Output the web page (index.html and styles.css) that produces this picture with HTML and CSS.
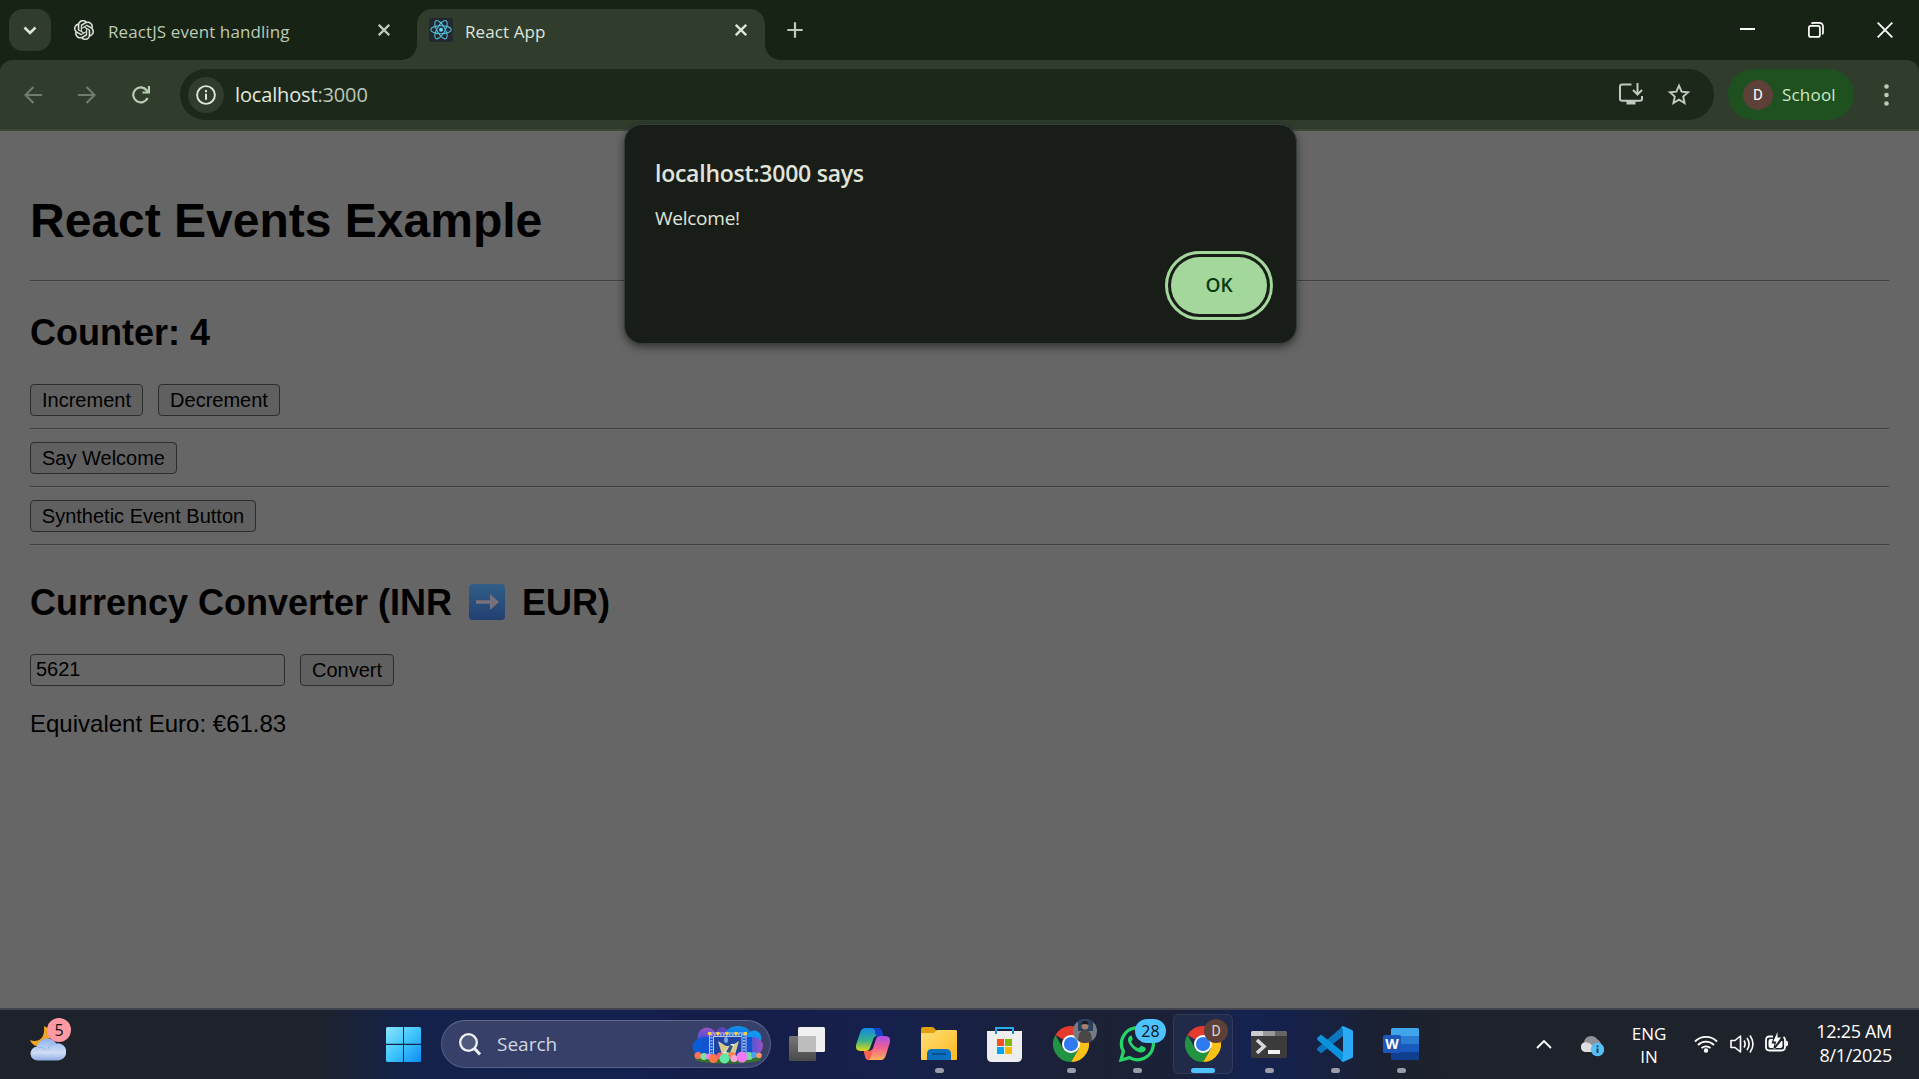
FILE: index.html
```html
<!DOCTYPE html>
<html lang="en">
<head>
<meta charset="utf-8">
<title>React App</title>
<link rel="stylesheet" href="styles.css">
</head>
<body>
<svg class="defs" width="0" height="0">
  <symbol id="chrome" viewBox="0 0 48 48">
    <path fill="#e33b2e" d="M24 24 3.2 12A24 24 0 0 1 44.8 12z"/>
    <path fill="#fbc116" d="M24 12h20.8A24 24 0 0 1 24 48l10.4-18z"/>
    <path fill="#229342" d="M3.2 12A24 24 0 0 0 24 48l10.4-18L24 24 13.6 30z"/>
    <circle cx="24" cy="24" r="12" fill="#fff"/>
    <circle cx="24" cy="24" r="9.5" fill="#2f7af0"/>
  </symbol>
  <symbol id="cross" viewBox="0 0 12 12"><path d="M.8.8l10.4 10.4M11.2.8.8 11.2" fill="none" stroke="currentColor" stroke-width="2.3"/></symbol>
</svg>

<header class="tabstrip">
  <button class="tab-search"><svg width="14" height="9" viewBox="0 0 14 9"><path d="M1.5 1.5 7 7l5.500-5.500" fill="none" stroke="currentColor" stroke-width="2.500"/></svg></button>
  <div class="tab">
    <svg class="gpt" width="20" height="20" viewBox="0 0 24 24"><path fill="#e8ebe6" stroke="#e8ebe6" stroke-width=".3" d="M22.2819 9.8211a5.9847 5.9847 0 0 0-.5157-4.9108 6.0462 6.0462 0 0 0-6.5098-2.9A6.0651 6.0651 0 0 0 4.9807 4.1818a5.9847 5.9847 0 0 0-3.9977 2.9 6.0462 6.0462 0 0 0 .7427 7.0966 5.98 5.98 0 0 0 .511 4.9107 6.051 6.051 0 0 0 6.5146 2.9001A5.9847 5.9847 0 0 0 13.2599 24a6.0557 6.0557 0 0 0 5.7718-4.2058 5.9894 5.9894 0 0 0 3.9977-2.9001 6.0557 6.0557 0 0 0-.7475-7.0729zm-9.022 12.6081a4.4755 4.4755 0 0 1-2.8764-1.0408l.1419-.0804 4.7783-2.7582a.7948.7948 0 0 0 .3927-.6813v-6.7369l2.02 1.1686a.071.071 0 0 1 .038.052v5.5826a4.504 4.504 0 0 1-4.4945 4.4944zm-9.6607-4.1254a4.4708 4.4708 0 0 1-.5346-3.0137l.142.0852 4.783 2.7582a.7712.7712 0 0 0 .7806 0l5.8428-3.3685v2.3324a.0804.0804 0 0 1-.0332.0615L9.74 19.9502a4.4992 4.4992 0 0 1-6.1408-1.6464zM2.3408 7.8956a4.485 4.485 0 0 1 2.3655-1.9728V11.6a.7664.7664 0 0 0 .3879.6765l5.8144 3.3543-2.0201 1.1685a.0757.0757 0 0 1-.071 0l-4.8303-2.7865A4.504 4.504 0 0 1 2.3408 7.872zm16.5963 3.8558L13.1038 8.364 15.1192 7.2a.0757.0757 0 0 1 .071 0l4.8303 2.7913a4.4944 4.4944 0 0 1-.6765 8.1042v-5.6772a.79.79 0 0 0-.407-.667zm2.0107-3.0231l-.142-.0852-4.7735-2.7818a.7759.7759 0 0 0-.7854 0L9.409 9.2297V6.8974a.0662.0662 0 0 1 .0284-.0615l4.8303-2.7866a4.4992 4.4992 0 0 1 6.6802 4.66zM8.3065 12.863l-2.02-1.1638a.0804.0804 0 0 1-.038-.0567V6.0742a4.4992 4.4992 0 0 1 7.3757-3.4537l-.142.0805L8.704 5.459a.7948.7948 0 0 0-.3927.6813zm1.0976-2.3654l2.602-1.4998 2.6069 1.4998v2.9994l-2.5974 1.4997-2.6067-1.4997Z"/></svg>
    <span class="tab-title t1">ReactJS event handling</span>
    <svg class="tab-close" width="12" height="12"><use href="#cross"/></svg>
  </div>
  <div class="tab active">
    <svg class="react" width="24" height="24" viewBox="0 0 24 24"><rect width="24" height="24" rx="3" fill="#23272f"/><g fill="none" stroke="#53c1de" stroke-width="1.100"><ellipse cx="12" cy="11.700" rx="10.300" ry="4"/><ellipse cx="12" cy="11.700" rx="10.300" ry="4" transform="rotate(60 12 11.700)"/><ellipse cx="12" cy="11.700" rx="10.300" ry="4" transform="rotate(120 12 11.700)"/></g><circle cx="12" cy="11.700" r="2" fill="#61dafb"/></svg>
    <span class="tab-title t2">React App</span>
    <svg class="tab-close" width="12" height="12"><use href="#cross"/></svg>
  </div>
  <svg class="plus" width="16" height="16" viewBox="0 0 16 16"><path d="M8 .3v15.400M.3 8h15.400" stroke="currentColor" stroke-width="2.200"/></svg>
  <div class="win-controls">
    <svg width="15" height="16" viewBox="0 0 15 16"><path d="M0 7h15" stroke="currentColor" stroke-width="2"/></svg>
    <svg width="16" height="16" viewBox="0 0 16 16" fill="none" stroke="currentColor" stroke-width="1.700"><rect x=".9" y="3.900" width="11" height="11" rx="2"/><path d="M3.500 1.600Q4.200.9 5.500.9h5.600q3.900 0 3.900 3.900v5.700q0 1.200-.8 1.800"/></svg>
    <svg width="16" height="16" viewBox="0 0 16 16"><path d="M.7.700l14.600 14.600M15.300.7.700 15.300" stroke="currentColor" stroke-width="1.800"/></svg>
  </div>
</header>

<nav class="toolbar-back"><div class="toolbar">
  <svg class="nav dim" width="18" height="18" viewBox="0 0 18 18"><path d="M18 9H2M9.500 1 1.500 9l8 8" fill="none" stroke="currentColor" stroke-width="2.100"/></svg>
  <svg class="nav dim" width="18" height="18" viewBox="0 0 18 18"><path d="M0 9h16M8.500 1l8 8-8 8" fill="none" stroke="currentColor" stroke-width="2.100"/></svg>
  <svg class="nav" width="18" height="18" viewBox="0 0 18 18"><path d="M15.600 12A7.500 7.500 0 1 1 14.600 4.200L16.500 6M17 0v6.500h-6.500" fill="none" stroke="currentColor" stroke-width="2.200"/></svg>
  <div class="omnibox">
    <span class="info"><svg width="20" height="20" viewBox="0 0 20 20"><circle cx="10" cy="10" r="8.900" fill="none" stroke="currentColor" stroke-width="1.900"/><path d="M10 8.800v6M10 5v2.200" stroke="currentColor" stroke-width="2"/></svg></span>
    <span class="url">localhost<span class="port">:3000</span></span>
    <svg class="install" width="24" height="23" viewBox="0 0 24 23"><path d="M12.500 1.500H3q-2 0-2 2V16q0 1.700 2 1.700h18q2 0 2-1.700v-3" fill="none" stroke="currentColor" stroke-width="2"/><path d="M7.500 18h9v3.500h-9z" fill="currentColor"/><path d="M18.500 0v11M14 7l4.500 4.500L23 7" fill="none" stroke="currentColor" stroke-width="2"/></svg>
    <svg class="star" width="24" height="23" viewBox="0 0 24 23"><path d="M12 2.700l2.600 6 6.500.600-4.900 4.300 1.400 6.400L12 16.600 6.400 20l1.400-6.400L2.900 9.300l6.500-.6z" fill="none" stroke="currentColor" stroke-width="1.900"/></svg>
  </div>
  <div class="profile"><span class="avatar">D</span><span class="school">School</span></div>
  <svg class="dots" width="5" height="22" viewBox="0 0 5 22" fill="currentColor"><circle cx="2.500" cy="2.500" r="2.300"/><circle cx="2.500" cy="11" r="2.300"/><circle cx="2.500" cy="19.500" r="2.300"/></svg>
</div></nav>

<main class="page">
  <h1>React Events Example</h1>
  <hr>
  <h2>Counter: 4</h2>
  <div class="row"><button class="b-inc">Increment</button><button class="b-dec">Decrement</button></div>
  <hr>
  <div class="row"><button class="b-say">Say Welcome</button></div>
  <hr>
  <div class="row"><button class="b-syn">Synthetic Event Button</button></div>
  <hr>
  <h2 class="converter">Currency Converter (INR <svg class="arrow" width="36" height="36" viewBox="0 0 36 36"><defs><linearGradient id="ar" x2="0" y2="1"><stop stop-color="#305f87"/><stop offset="1" stop-color="#233f72"/></linearGradient></defs><rect width="36" height="36" rx="4" fill="url(#ar)"/><path d="M7 16.200h14V10l9 8-9 8v-6.200H7z" fill="#78707a"/></svg> EUR)</h2>
  <div class="row"><input type="text" value="5621"><button class="b-con">Convert</button></div>
  <p>Equivalent Euro: €61.83</p>
</main>

<section class="dialog">
  <div class="dialog-title">localhost:3000 says</div>
  <div class="dialog-text">Welcome!</div>
  <button class="ok"><span>OK</span></button>
</section>

<footer class="taskbar">
  <div class="weather">
    <svg width="36" height="36" viewBox="0 0 36 36"><defs><linearGradient id="cl" x2="0" y2="1"><stop stop-color="#8fb4f0"/><stop offset=".65" stop-color="#cfdcf5"/><stop offset="1" stop-color="#8eaae4"/></linearGradient></defs><path d="M14 0q1 10-4 13.500Q6 16 0 14q3 7 9 6l12-9Q20 2 14 0z" fill="#f0a423"/><path d="M8 34.500a7 7 0 0 1-1-14 10.500 10.500 0 0 1 19-3 8.600 8.600 0 1 1 1 17z" fill="url(#cl)"/><path d="M8 21.500q5-1 8 2.500m2-1q2-6 8-6" stroke="#94b4ec" fill="none"/></svg>
    <span class="badge pink">5</span>
  </div>
  <div class="start"><svg width="35" height="35" viewBox="0 0 35 35"><defs><linearGradient id="wn" x2="1" y2="1" gradientUnits="userSpaceOnUse" gradientTransform="scale(35)"><stop stop-color="#8be4fd"/><stop offset=".5" stop-color="#3fc5fb"/><stop offset="1" stop-color="#0d8cf5"/></linearGradient></defs><path fill="url(#wn)" d="M1.500 0H17v16.800H0V1.500Q0 0 1.500 0zM18 0h15.500Q35 0 35 1.500v15.300H18zM0 18h17v17H1.500Q0 35 0 33.500zM18 18h17v15.500q0 1.500-1.500 1.500H18z"/></svg></div>
  <div class="search">
    <svg width="22" height="23" viewBox="0 0 22 23"><circle cx="9.500" cy="9.500" r="8.300" fill="#ffffff22" stroke="#f0f1f5" stroke-width="2.300"/><path d="M15.500 15.500 21 21.500" stroke="#f0f1f5" stroke-width="3"/></svg>
    <span class="search-label">Search</span>
    <svg class="art" width="72" height="39" viewBox="0 0 72 39">
      <defs>
        <linearGradient id="b1" x2="0" y2="1"><stop stop-color="#a050c8"/><stop offset="1" stop-color="#0a4fd8"/></linearGradient>
        <linearGradient id="b2" x2="0" y2="1"><stop stop-color="#1191ee"/><stop offset="1" stop-color="#0b4fd0"/></linearGradient>
        <linearGradient id="b3" x2="1" y2="0"><stop stop-color="#1a5fdc"/><stop offset="1" stop-color="#a54fc4"/></linearGradient>
      </defs>
      <ellipse cx="36" cy="34.500" rx="33" ry="4" fill="#37702b"/>
      <circle cx="30" cy="8" r="6" fill="#5945b8"/><circle cx="15" cy="12" r="9.500" fill="url(#b1)"/><circle cx="9" cy="22" r="8.500" fill="#0b5ad6"/><ellipse cx="46" cy="12" rx="14" ry="11" fill="url(#b2)"/><circle cx="62" cy="13" r="7.500" fill="#1496ee"/><circle cx="62" cy="21" r="9" fill="url(#b3)"/>
      <rect x="10" y="12" width="50" height="19" fill="#1453cf"/><rect x="21" y="11" width="29" height="20" fill="#1e43a0"/>
      <path d="M17.500 31V8.500M21.500 31V12" fill="none" stroke="#b9c5ee" stroke-width="1"/><path d="M50 31V12M54 31V8.500" fill="none" stroke="#b9c5ee" stroke-width="1"/><path d="M17 8h38M21 11.500h29" stroke="#b9c5ee" stroke-width="1"/>
      <path d="M19.500 9v22M52 9v22M19 9.800h34" stroke="#a5b5e8" stroke-width="2" stroke-dasharray="1.500 1.500"/>
      <g fill="#ffce3e"><circle cx="17.500" cy="8.500" r="1.800"/><circle cx="26" cy="8.500" r="1.800"/><circle cx="35" cy="8.500" r="1.800"/><circle cx="44" cy="8.500" r="1.800"/><circle cx="53.500" cy="8.500" r="1.800"/></g>
      <path d="M26 16l8 5 5 0 8-5-4 14H30z" fill="#d9c88e"/><path d="M31 28l8-9h4l-5 9z" fill="#e9e8dc"/><path d="M34 27l4-7 3 1-3 7z" fill="#33586a"/><ellipse cx="34" cy="15" rx="2" ry="3" fill="#7f9fe0"/>
      <circle cx="6" cy="30.500" r="3.500" fill="#ff7452"/><circle cx="12" cy="31.500" r="3.500" fill="#79e5a0"/><circle cx="17" cy="31.500" r="3" fill="#f07dee"/><circle cx="21.500" cy="33.500" r="4.500" fill="#ff7847"/><circle cx="28" cy="31" r="3.500" fill="#ff5d70"/><circle cx="40" cy="30.500" r="3.500" fill="#fc8050"/><circle cx="42" cy="33.500" r="3.500" fill="#f9a2d7"/><circle cx="32.500" cy="33.500" r="5" fill="#63e8a8"/><circle cx="57" cy="31" r="4" fill="#74dca0"/><circle cx="62" cy="30" r="3" fill="#44a5f6"/><circle cx="50" cy="32" r="5.500" fill="#f07af4"/><circle cx="67" cy="30.500" r="2.800" fill="#ff9864"/>
    </svg>
  </div>
  <div class="apps">
    <div class="app"><svg width="36" height="35" viewBox="0 0 36 35"><defs><linearGradient id="tv" x2="0" y2="1"><stop stop-color="#777"/><stop offset="1" stop-color="#4a4a4a"/></linearGradient></defs><rect y="9" width="27" height="25" rx="1.500" fill="url(#tv)"/><rect x="9" width="27" height="25" rx="1.500" fill="#f0f0f0"/><path d="M9 9h18v16H9z" fill="#bdbdbd"/></svg></div>
    <div class="app"><svg width="34" height="32" viewBox="0 0 34 32"><defs><linearGradient id="c1" x2="0" y2="1"><stop stop-color="#1687e6"/><stop offset=".55" stop-color="#36b389"/><stop offset="1" stop-color="#e5d61c"/></linearGradient><linearGradient id="c2" x2="0" y2="1"><stop stop-color="#a94ff0"/><stop offset=".5" stop-color="#f0618f"/><stop offset="1" stop-color="#ffb258"/></linearGradient></defs><path d="M9 0h13q3 0 4 4l1 4h-6q-3 0-4 4l-3 8q-1 3-4 3H5Q-1 23 0 17L4 5Q5.500 0 9 0z" fill="url(#c1)"/><path d="M17 0h5q3 0 4 4l1 4h-5q-3 0-3-4t-4-4z" fill="#1440c8"/><path d="M25 32H13q-3 0-4-4l-1-5h5q3 0 4-3l3-9q1-3 4-3h5q6 0 5 6l-4 13q-1.500 5-5 5z" fill="url(#c2)"/><path d="M8 23h6l3-2-2 7q-1 4-3 4-2 0-3-4z" fill="#ff6150"/></svg></div>
    <div class="app"><svg width="36" height="34" viewBox="0 0 36 34"><defs><linearGradient id="fo" x2="1" y2="1"><stop stop-color="#ffe07a"/><stop offset="1" stop-color="#fdb81d"/></linearGradient></defs><path d="M0 2q0-2 2-2h9q2 0 3 2l2 2v5H0z" fill="#dfa00b"/><path d="M0 6h13l3-3h19q1 0 1 1.500V32q0 1-1 1H1q-1 0-1-1z" fill="url(#fo)"/><path d="M6 33v-6q0-5 5-5h14q5 0 5 5v6z" fill="#0b6fc0"/><path d="M11 27h14" stroke="#064480" stroke-width="1.500"/></svg><i></i></div>
    <div class="app"><svg class="store" width="35" height="35" viewBox="0 0 35 35"><path d="M9 7V1h17v6" fill="none" stroke="#2dacea" stroke-width="2"/><path d="M0 4h35v26q0 5-5 5H5q-5 0-5-5z" fill="#eee"/><path d="M10 12h7v7h-7z" fill="#f25022"/><path d="M18 12h7v7h-7z" fill="#7fba00"/><path d="M10 20h7v7h-7z" fill="#00a4ef"/><path d="M18 20h7v7h-7z" fill="#ffb900"/><path d="M9 7V4M26 7V4" stroke="#1688c5" stroke-width="2"/></svg></div>
    <div class="app"><svg width="36" height="36"><use href="#chrome"/></svg><span class="badge photo"><svg width="24" height="24" viewBox="0 0 24 24"><circle cx="12" cy="12" r="12" fill="#777a80"/><path d="M5 2.200Q8 0 12 0q5 0 8 3v9H5z" fill="#27415e"/><circle cx="12" cy="7" r="3.500" fill="#a87f72"/><path d="M8.500 6q0-4 3.500-4t3.500 4q-3.500-2-7 0z" fill="#1d1a20"/><path d="M5 21.500q0-10 7-10.500 7 .5 7 10.500-3 2.500-7 2.500t-7-2.500z" fill="#4a4746"/></svg></span><i></i></div>
    <div class="app"><svg width="36" height="36" viewBox="0 0 36 36"><path d="M2 34l2.400-8.600A16 16 0 1 1 10.500 31.600z" fill="none" stroke="#25d366" stroke-width="3.300"/><path d="M12.500 9.500q-1.500-.3-2.700 1.500-2 3 .7 7.300 3.500 5.600 9 7.700 4.600 1.700 6.800-1.500 1-1.800.3-2.800l-4-2q-1 0-2.300 2-.6.8-1.600.3-4.200-1.800-6.200-5.500-.5-.8.2-1.500 1.300-1.500 1-2.200z" fill="#25d366"/></svg><span class="badge count">28</span><i></i></div>
    <div class="app current"><svg width="36" height="36"><use href="#chrome"/></svg><span class="badge initial">D</span><i></i></div>
    <div class="app"><svg width="36" height="27" viewBox="0 0 36 27"><rect width="36" height="27" rx="1.500" fill="#3b3b3b"/><path d="M0 5V1.500Q0 0 1.500 0H12v5z" fill="#ccc"/><path d="M12 0h12v5H12z" fill="#999"/><path d="M24 0h10.500Q36 0 36 1.500V5H24z" fill="#666"/><path d="M6 9l7 6.500L6 22" fill="none" stroke="#d9d9d9" stroke-width="3.600"/><path d="M17 19h12v4H17z" fill="#f2f2f2"/></svg><i></i></div>
    <div class="app"><svg width="36" height="36" viewBox="0 0 36 36"><path d="M26 10 4 27.500 0 24q-.5-1 .5-2L26 0z" fill="#0b76bd"/><path d="M26 26 4 8.500 0 12q-.5 1 .5 2L26 36z" fill="#0a92dc"/><path d="M26 0l9 4q1 .5 1 1.500v25q0 1-1 1.500l-9 4-2-1.500q2-.5 2-2.500V4q0-2-2-2.500z" fill="#29aaf3"/></svg><i></i></div>
    <div class="app"><svg width="36" height="32" viewBox="0 0 36 32"><path d="M8 1.500Q8 0 9.500 0h25Q36 0 36 1.500V8H8z" fill="#41a5ee"/><path d="M8 8h28v8H8z" fill="#2b7cd3"/><path d="M8 16h28v8H8z" fill="#185abd"/><path d="M8 24h28v6.500q0 1.500-1.500 1.500h-25Q8 32 8 30.500z" fill="#103f91"/><rect y="7" width="18" height="18" rx="1.500" fill="#1c57b9"/><text x="9" y="21" text-anchor="middle" class="word-w">W</text></svg><i></i></div>
  </div>
  <div class="tray">
    <svg class="chev" width="16" height="10" viewBox="0 0 16 10"><path d="M1 9l7-7 7 7" fill="none" stroke="#fff" stroke-width="1.900"/></svg>
    <svg class="cloud" width="24" height="21" viewBox="0 0 24 21"><path d="M5 16a5 5 0 0 1-1-9.500Q5 0 11 0q4 0 6 3 4 2 4 6l-6 7z" fill="#8f9296"/><path d="M5 16a5 5 0 0 1-1-9.500q5-1 9 4l2 5.500z" fill="#dedede"/><circle cx="17.500" cy="13.500" r="6.700" fill="#55c0f8"/><path d="M17.500 12.500v4.500M17.500 9.500v1.700" stroke="#153146" stroke-width="1.800"/></svg>
    <div class="lang"><span>ENG</span><span>IN</span></div>
    <svg class="wifi" width="24" height="19" viewBox="0 0 24 19" fill="none" stroke="#fff" stroke-width="1.800"><path d="M1 7.500a15.500 15.500 0 0 1 22 0M4 11a11.300 11.300 0 0 1 16 0M7.500 14.200a6.400 6.400 0 0 1 9 0"/><circle cx="12" cy="16.500" r="1.300" fill="#fff"/></svg>
    <svg class="vol" width="24" height="20" viewBox="0 0 24 20" fill="none" stroke="#fff" stroke-width="1.600" stroke-linejoin="round"><path d="M1 6.500h4L10.500 2v16L5 13.500H1zM14 6.500q2.200 3.500 0 7M17 4q4.200 6 0 12M20 1.500q6 8.500 0 17"/></svg>
    <svg class="bat" width="24" height="21" viewBox="0 0 24 21"><path d="M8 4.500H4.500Q1 4.500 1 8v7q0 3.500 3.500 3.500h12Q20 18.500 20 15V8q0-2-1.500-3" fill="none" stroke="#fff" stroke-width="1.800"/><path d="M21 8.500q2 .3 2 2v2q0 1.700-2 2z" fill="#fff"/><path d="M3.500 9q0-2 2-2H8l-1.500 4.500H9.500L8.300 16.500l2 0 6.200-7.500h1V14q0 2-2 2h-10q-2 0-2-2z" fill="#fff"/><path d="M12.500 0 8.300 9.500h3L10 14l6-8.500h-3.500z" fill="#fff"/></svg>
    <div class="clock"><span class="time">12:25 AM</span><span class="date">8/1/2025</span></div>
  </div>
</footer>
</body>
</html>
```
FILE: styles.css
```css
* { box-sizing: border-box; }
html, body { height: 100%; }
body {
  margin: 0;
  display: flex;
  flex-direction: column;
  overflow: hidden;
  position: relative;
  background: #666;
  font-family: "Open Sans", "Noto Sans", sans-serif;
}
svg { display: block; flex: none; }
button { margin: 0; font-family: inherit; }
.defs { position: absolute; }

/* Tab strip */
.tabstrip {
  flex: none;
  height: 60px;
  padding: 9px 26px 0 9px;
  display: flex;
  align-items: flex-start;
  background: #172314;
  color: #bccbb5;
}
.tab-search {
  width: 42px;
  height: 42px;
  padding: 0;
  border: 0;
  border-radius: 14px;
  background: #303d2d;
  color: #dfe5da;
  display: grid;
  place-items: center;
}
.tab {
  height: 51px;
  width: 366px;
  display: flex;
  align-items: flex-start;
  padding: 11px 27px 0 23px;
}
.tab-title { font-size: 17px; line-height: 24px; letter-spacing: 0.1px; margin: 0 auto 0 14px; padding-top: 0; white-space: nowrap; }
.tab-close { margin-top: 4px; }
.tab.active {
  width: 348px;
  padding: 9px 18px 0 12px;
  background: #303d2d;
  color: #dfe5da;
  border-radius: 15px 15px 0 0;
  position: relative;
}
.tab.active .tab-title { margin-left: 12px; padding-top: 2px; }
.tab.active .tab-close { margin-top: 6px; }
.tab.active::before, .tab.active::after {
  content: "";
  position: absolute;
  bottom: 0;
  width: 15px;
  height: 15px;
}
.tab.active::before { left: -15px; background: radial-gradient(circle at 0 0, transparent 14.5px, #303d2d 15px); }
.tab.active::after { right: -15px; background: radial-gradient(circle at 100% 0, transparent 14.5px, #303d2d 15px); }
.plus { margin: 13px 0 0 22px; }
.win-controls { margin: 13px 0 0 auto; display: flex; gap: 53px; color: #fff; }

/* Toolbar */
.toolbar-back { flex: none; background: #172314; }
.toolbar {
  height: 71px;
  padding: 0 29px 0 24px;
  display: flex;
  align-items: center;
  background: #303d2d;
  border-radius: 12px 12px 0 0;
  border-bottom: 2px solid #3c4939;
  color: #b8ceb0;
}
.nav { margin-right: 36px; }
.dim { color: #707c6c; }
.omnibox {
  width: 1534px;
  height: 51px;
  margin-left: -6px;
  padding: 0 23px 0 8px;
  border-radius: 26px;
  background: #1c291a;
  display: flex;
  align-items: center;
  color: #c3c9be;
}
.info {
  width: 36px;
  height: 36px;
  border-radius: 50%;
  background: #303d2d;
  display: grid;
  place-items: center;
  color: #dfe5da;
}
.url { margin: 0 auto 0 11px; font-size: 20px; line-height: 28px; color: #e2e7dc; letter-spacing: -0.15px; }
.port { color: #bcc6b6; }
.star { margin-left: 24px; }
.profile {
  width: 126px;
  height: 51px;
  margin: 0 30px 0 14px;
  padding-left: 15px;
  border-radius: 26px;
  background: #1e5020;
  display: flex;
  align-items: center;
  color: #cfe8c6;
}
.avatar {
  width: 30px;
  height: 30px;
  border-radius: 50%;
  background: #5d4037;
  color: #fff;
  font: 15px/30px Roboto, sans-serif;
  text-align: center;
}
.school { margin-left: 9px; font-size: 17px; letter-spacing: 0.2px; }

/* Page */
.page {
  flex: 1;
  padding: 62px 30px 0;
  background: #666;
  color: #000;
  font: 24px/27px "Liberation Sans", Arial, sans-serif;
}
h1 { margin: 0 0 32px; font-size: 48px; line-height: 55px; }
h2 { margin: 30px 0; font-size: 36px; line-height: 42px; }
hr { height: 2px; margin: 12px 0; border: 0; border-top: 1px solid #3f3f3f; border-bottom: 1px solid #6c6c6c; }
.row { display: flex; gap: 15px; }
.row button, .row input {
  height: 32px;
  border: 1px solid #2d2d2d;
  border-radius: 4px;
  background: #606060;
  color: #000;
  padding: 0;
  font: 20px/28px "Liberation Sans", Arial, sans-serif;
}
.row input { width: 255px; padding: 0 5px 2px; background: #666; }
.b-inc { width: 113px; }
.b-dec { width: 122px; }
.b-say { width: 147px; }
.b-syn { width: 226px; }
.b-con { width: 94px; }
.converter { margin: 36px 0 30px; }
.arrow { display: inline-block; vertical-align: -5px; margin: 0 7px; }
p { margin: 24px 0; }

/* Alert dialog */
.dialog {
  position: absolute;
  left: 624px;
  top: 124px;
  width: 673px;
  height: 220px;
  padding: 32px 30px 0 30px;
  border: 1px solid #343f3d;
  border-radius: 18px;
  background: #191d18;
  color: #e0e4da;
  box-shadow: 0 3px 8px rgba(0, 0, 0, .5);
}
.dialog-title { font-size: 23px; font-weight: 600; line-height: 32px; letter-spacing: -0.25px; }
.dialog-text { margin-top: 16px; font-size: 19px; line-height: 26px; letter-spacing: -0.25px; }
.ok {
  display: block;
  width: 108px;
  height: 69px;
  margin: 20px -7px 0 auto;
  padding: 3px;
  border: 3px solid #a3d79c;
  border-radius: 35px;
  background: none;
}
.ok span {
  display: block;
  height: 57px;
  border-radius: 29px;
  background: #a3d79c;
  color: #083a11;
  font-size: 19px;
  font-weight: 600;
  line-height: 57px;
}

/* Taskbar */
.taskbar {
  flex: none;
  height: 71px;
  border-top: 2px solid #40444e;
  background: linear-gradient(90deg, #1e222a 0, #1e222a 310px, #14224b 410px, #14204f 640px, #151d49 700px, #16214b 900px, #1c2135 1090px, #1a2138 1180px, #142350 1245px, #15214a 1290px, #1b2132 1380px, #1e222a 1460px);
  display: flex;
  color: #fff;
}
.weather { position: relative; width: 340px; margin-right: 30px; padding: 16px 0 0 30px; }
.badge {
  position: absolute;
  height: 24px;
  border-radius: 12px;
  color: #111;
  font-size: 16px;
  line-height: 24px;
  text-align: center;
}
.pink { left: 47px; top: 8px; width: 24px; background: #ff99a4; }
.start { width: 67px; padding: 17px 0 0 16px; }
.search {
  width: 330px;
  height: 48px;
  margin: 10px 3px 0 4px;
  padding: 0 6px 0 17px;
  border: 1px solid #55608a;
  border-top-color: #63698d;
  border-radius: 24px;
  background: #364069;
  display: flex;
  align-items: center;
}
.search-label { margin: 0 auto 0 16px; font-size: 19px; color: #d4d7e2; }
.apps { display: flex; padding-top: 4px; }
.app {
  position: relative;
  width: 60px;
  height: 60px;
  margin: 0 3px;
  display: grid;
  place-items: center;
}
.store { margin-right: 1px; }
.app i {
  position: absolute;
  left: 26px;
  bottom: 1px;
  width: 9px;
  height: 5px;
  border-radius: 3px;
  background: #9a9ca8;
}
.current { border-radius: 6px; background: #26305299; box-shadow: inset 0 0 0 1px #313a5b; }
.current i { left: 18px; width: 24px; background: #4cc2ff; }
.photo { left: 32px; top: 5px; }
.count { left: 28px; top: 5px; width: 31px; background: #4cc2ff; }
.initial { left: 31px; top: 5px; width: 24px; background: #5d4037; color: #ddd6d3; font-family: Roboto, sans-serif; font-size: 14px; }
.word-w { font: 700 14px "Open Sans", sans-serif; fill: #fff; }
.tray { flex: 1; display: flex; padding-right: 27px; font-size: 17px; line-height: 23px; }
.chev { margin: 29px 0 0 102px; }
.cloud { margin: 26px 0 0 28px; }
.lang { width: 60px; margin: 12px 0 0 15px; display: flex; flex-direction: column; align-items: center; }
.lang, .clock { white-space: nowrap; }
.wifi { margin: 24px 0 0 15px; }
.vol { margin: 24px 0 0 12px; }
.bat { margin: 22px 0 0 11px; }
.clock { margin: 9px 0 0 auto; display: flex; flex-direction: column; align-items: flex-end; font-size: 18px; line-height: 24px; letter-spacing: -0.3px; }
```
